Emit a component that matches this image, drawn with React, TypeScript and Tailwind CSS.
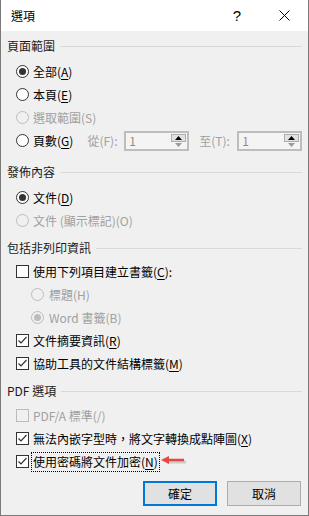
import React from "react";

const FONT = "font-['Noto_Sans_CJK_TC','Noto_Sans',sans-serif]";

function Mn({ children }: { children: React.ReactNode }) {
  return <span className="underline underline-offset-[2px] decoration-1">{children}</span>;
}

function Radio({ checked = false, disabled = false }: { checked?: boolean; disabled?: boolean }) {
  return (
    <span
      className={`w-[13px] h-[13px] rounded-full border flex items-center justify-center shrink-0 ${
        disabled ? "border-[#bcbcbc] bg-[#f0f0f0]" : "border-[#333333] bg-white"
      }`}
    >
      {checked && (
        <span className={`w-[7px] h-[7px] rounded-full ${disabled ? "bg-[#bcbcbc]" : "bg-[#333333]"}`} />
      )}
    </span>
  );
}

function Checkbox({ checked = false, disabled = false }: { checked?: boolean; disabled?: boolean }) {
  return (
    <span
      className={`w-[13px] h-[13px] border flex items-center justify-center shrink-0 ${
        disabled ? "border-[#bcbcbc] bg-[#f0f0f0]" : "border-[#333333] bg-white"
      }`}
    >
      {checked && (
        <svg width="11" height="11" viewBox="0 0 11 11">
          <polyline points="1.5,5.5 4,8 9.5,2" fill="none" stroke="#333" strokeWidth="1.2" />
        </svg>
      )}
    </span>
  );
}

function Row({
  control,
  children,
  disabled = false,
  sub = false,
}: {
  control: React.ReactNode;
  children: React.ReactNode;
  disabled?: boolean;
  sub?: boolean;
}) {
  return (
    <div className={`h-[23px] flex items-center gap-[4px] ${sub ? "pl-[24px] gap-[5px]" : "pl-[9px]"}`}>
      {control}
      <span className={`leading-none whitespace-nowrap ${disabled ? "text-[#a0a0a0]" : "text-black"}`}>
        {children}
      </span>
    </div>
  );
}

function Header({ title, className = "" }: { title: string; className?: string }) {
  return (
    <div className={`h-[22px] flex items-center gap-[5px] ${className}`}>
      <span className="leading-none whitespace-nowrap text-[#1a1a1a]">{title}</span>
      <div className="flex-1 h-px bg-[#d9d9d9]" />
    </div>
  );
}

function Spinner() {
  return (
    <div className="w-[65px] h-[20px] border-2 border-[#bdbdbd] bg-[#f4f4f4] flex items-stretch">
      <div className="flex-1 flex items-center pl-[3px] text-[#a08878] leading-none">1</div>
      <div className="w-[15px] flex flex-col my-[1px] mr-[1px]">
        <div className="flex-1 border border-[#adadad] bg-[#e1e1e1] flex items-center justify-center">
          <svg width="7" height="4" viewBox="0 0 7 4">
            <polygon points="0,4 7,4 3.5,0" fill="#000" />
          </svg>
        </div>
        <div className="flex-1 flex items-center justify-center">
          <svg width="7" height="4" viewBox="0 0 7 4">
            <polygon points="0,0 7,0 3.5,4" fill="#9a9a9a" />
          </svg>
        </div>
      </div>
    </div>
  );
}

export default function App() {
  return (
    <div className={`w-[309px] h-[516px] flex flex-col border-x border-b border-[#7a7a7a] bg-[#f0f0f0] text-[12px] ${FONT}`}>
      {/* Title bar */}
      <div className="h-[31px] bg-white flex items-center pl-[10px] pr-[18px]">
        <span className="text-[12px] leading-none text-black">選項</span>
        <span className="ml-auto text-[15px] leading-none text-black font-['Liberation_Sans',sans-serif] mr-[38px]">?</span>
        <svg width="11" height="11" viewBox="0 0 11 11">
          <path d="M0.5 0.5 L10.5 10.5 M10.5 0.5 L0.5 10.5" stroke="#000" strokeWidth="1" />
        </svg>
      </div>

      {/* Body */}
      <div className="flex-1 flex flex-col pl-[6px] pr-[6px] pt-[4px]">
        <Header title="頁面範圍" />
        <div className="mt-[3px] flex flex-col">
          <Row control={<Radio checked />}>
            全部(<Mn>A</Mn>)
          </Row>
          <Row control={<Radio />}>
            本頁(<Mn>E</Mn>)
          </Row>
          <Row control={<Radio disabled />} disabled>
            選取範圍(S)
          </Row>
          <div className="h-[23px] flex items-center pl-[9px]">
            <Radio />
            <span className="ml-[4px] leading-none whitespace-nowrap">
              頁數(<Mn>G</Mn>)
            </span>
            <span className="ml-[14px] leading-none text-[#a0a0a0] whitespace-nowrap w-[37px]">從(F):</span>
            <Spinner />
            <span className="ml-[10px] leading-none text-[#a0a0a0] whitespace-nowrap w-[38px]">至(T):</span>
            <Spinner />
          </div>
        </div>

        <Header title="發佈內容" className="mt-[9px]" />
        <div className="mt-[3px] flex flex-col">
          <Row control={<Radio checked />}>
            文件(<Mn>D</Mn>)
          </Row>
          <Row control={<Radio disabled />} disabled>
            文件 (顯示標記)(O)
          </Row>
        </div>

        <Header title="包括非列印資訊" className="mt-[5px]" />
        <div className="mt-[1px] flex flex-col">
          <Row control={<Checkbox />}>
            使用下列項目建立書籤(<Mn>C</Mn>):
          </Row>
          <Row control={<Radio disabled />} disabled sub>
            標題(H)
          </Row>
          <Row control={<Radio checked disabled />} disabled sub>
            Word 書籤(B)
          </Row>
          <Row control={<Checkbox checked />}>
            文件摘要資訊(<Mn>R</Mn>)
          </Row>
          <Row control={<Checkbox checked />}>
            協助工具的文件結構標籤(<Mn>M</Mn>)
          </Row>
        </div>

        <Header title="PDF 選項" className="mt-[5px]" />
        <div className="mt-[2px] flex flex-col">
          <Row control={<Checkbox disabled />} disabled>
            PDF/A 標準(/)
          </Row>
          <Row control={<Checkbox checked />}>
            無法內嵌字型時，將文字轉換成點陣圖(<Mn>X</Mn>)
          </Row>
          <div className="h-[23px] flex items-center pl-[9px]">
            <Checkbox checked />
            <span className="relative ml-[3px] leading-none whitespace-nowrap outline outline-1 outline-dotted outline-black px-[1px] py-[3px]">
              使用密碼將文件加密(<Mn>N</Mn>)
              {/* red annotation arrow */}
              <svg
                className="absolute left-[calc(100%+2px)] top-[0px]"
                width="28"
                height="16"
                viewBox="0 0 28 16"
              >
                <line x1="6" y1="9" x2="25" y2="9" stroke="#888" strokeOpacity="0.35" strokeWidth="3" />
                <line x1="6" y1="7" x2="23" y2="7" stroke="#e5483f" strokeWidth="2.5" />
                <polygon points="0,7 8,3 8,11" fill="#e5483f" />
              </svg>
            </span>
          </div>
        </div>

        <div className="mt-[8px] flex justify-end gap-[10px] pr-[1px]">
          <button className="w-[74px] h-[25px] border-2 border-[#0078d7] bg-[#e1e1e1] text-black leading-none">
            確定
          </button>
          <button className="w-[74px] h-[25px] border border-[#adadad] bg-[#e1e1e1] text-black leading-none">
            取消
          </button>
        </div>
      </div>
    </div>
  );
}
